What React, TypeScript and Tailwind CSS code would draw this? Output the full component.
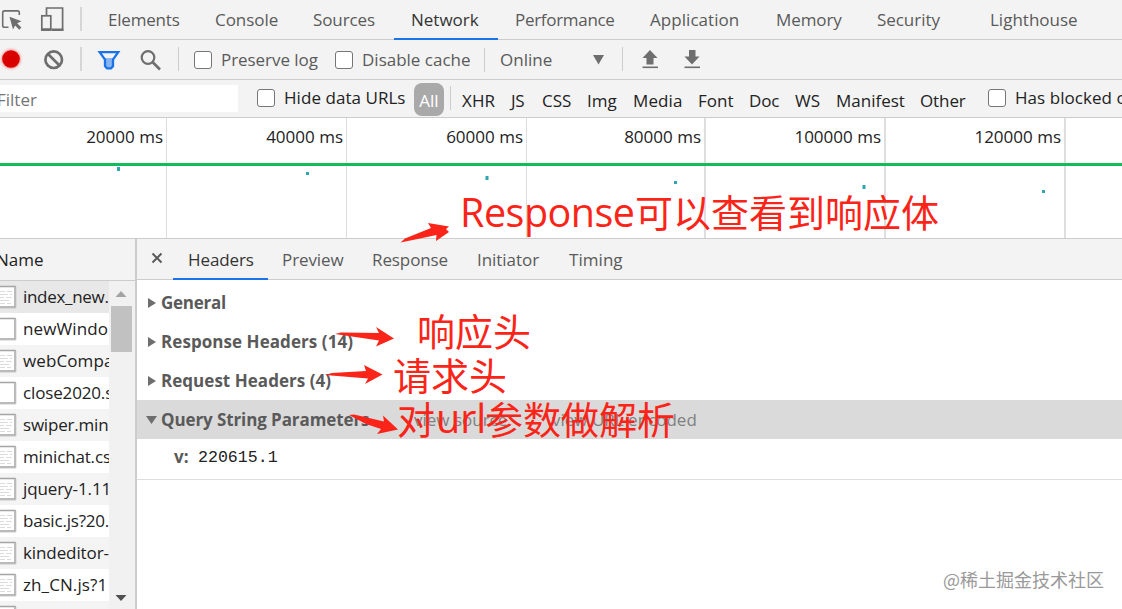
import clsx from 'clsx'

const mainTabs = [
  { label: 'Elements', cell: 'w-[107px]', text: 'tracking-[-0.2px]' },
  { label: 'Console', cell: 'w-[98px]', text: 'tracking-[-0.05px]' },
  { label: 'Sources', cell: 'w-[98px]', text: 'tracking-[-0.1px]' },
  { label: 'Network', cell: 'w-[104px]', text: 'tracking-[0px]', active: true },
  { label: 'Performance', cell: 'w-[135px]', text: 'tracking-[-0.3px]' },
  { label: 'Application', cell: 'w-[126px]', text: 'tracking-[0.05px]' },
  { label: 'Memory', cell: 'w-[101px]', text: 'tracking-[-0.1px]' },
  { label: 'Security', cell: 'w-[113px]', text: 'tracking-[-0.05px]' },
  { label: 'Lighthouse', cell: 'w-[122px]', text: 'tracking-[0px]' },
]

const filterTypes = [
  { label: 'XHR', cell: 'w-[49px]', text: 'tracking-[0.1px]' },
  { label: 'JS', cell: 'w-[31px]', text: 'tracking-[-0.3px]' },
  { label: 'CSS', cell: 'w-[45px]', text: 'tracking-[0px]' },
  { label: 'Img', cell: 'w-[46px]', text: 'tracking-[0px]' },
  { label: 'Media', cell: 'w-[65px]', text: 'tracking-[0.1px]' },
  { label: 'Font', cell: 'w-[51px]', text: 'tracking-[0px]' },
  { label: 'Doc', cell: 'w-[46px]', text: 'tracking-[-0.1px]' },
  { label: 'WS', cell: 'w-[41px]', text: 'tracking-[0px]' },
  { label: 'Manifest', cell: 'w-[84px]', text: 'tracking-[0px]' },
  { label: 'Other', cell: 'w-[68px]', text: 'tracking-[-0.1px]' },
]

const ticks = [
  { label: '20000 ms', cell: 'w-[167px] border-r' },
  { label: '40000 ms', cell: 'w-[180px] border-r' },
  { label: '60000 ms', cell: 'w-[180px] border-r' },
  { label: '80000 ms', cell: 'w-[179px] border-r-2' },
  { label: '100000 ms', cell: 'w-[180px] border-r-2' },
  { label: '120000 ms', cell: 'w-[180px] border-r-2' },
]

// small request marks under the overview line
const marks = [
  { x: 117, y: 49, h: 4 },
  { x: 306, y: 54, h: 3 },
  { x: 485.5, y: 58, h: 4 },
  { x: 674, y: 63, h: 3 },
  { x: 862.5, y: 67, h: 4 },
  { x: 1042, y: 72, h: 3 },
]

const requests = [
  { name: 'index_new.', text: true, tracking: 'tracking-[-0.3px]' },
  { name: 'newWindo', text: false, tracking: 'tracking-[0.1px]' },
  { name: 'webCompa', text: true, tracking: 'tracking-[0.1px]' },
  { name: 'close2020.s', text: false, tracking: 'tracking-[-0.15px]' },
  { name: 'swiper.min', text: true, tracking: 'tracking-[-0.2px]' },
  { name: 'minichat.cs', text: true, tracking: 'tracking-[-0.15px]' },
  { name: 'jquery-1.11', text: true, tracking: 'tracking-[-0.1px]' },
  { name: 'basic.js?20.', text: true, tracking: 'tracking-[-0.2px]' },
  { name: 'kindeditor-', text: true, tracking: 'tracking-[-0.1px]' },
  { name: 'zh_CN.js?1', text: true, tracking: 'tracking-[0.1px]' },
  { name: '', text: true, tracking: 'tracking-[0px]' },
]

const detailTabs = [
  { label: 'Headers', cell: 'w-[95px]', text: 'tracking-[-0.1px]', active: true },
  { label: 'Preview', cell: 'w-[90px]', text: 'tracking-[-0.1px]' },
  { label: 'Response', cell: 'w-[105px]', text: 'tracking-[-0.1px]' },
  { label: 'Initiator', cell: 'w-[92px]', text: 'tracking-[-0.05px]' },
  { label: 'Timing', cell: 'w-[84px]', text: 'tracking-[0.05px]' },
]

const sections = [
  { label: 'General', text: 'tracking-[-0.25px]' },
  { label: 'Response Headers (14)', text: 'tracking-[0.06px]' },
  { label: 'Request Headers (4)', text: 'tracking-[0.03px]' },
]

function Checkbox() {
  return <span className="h-[18px] w-[18px] shrink-0 rounded-[3px] border border-[#767676] bg-white" />
}

function Divider({ className }: { className?: string }) {
  return <span className={clsx('w-px shrink-0 bg-[#ccc]', className)} />
}

function FileIcon({ lines }: { lines: boolean }) {
  return (
    <svg className="shrink-0" width="17" height="24" viewBox="0 0 17 24">
      <rect x="-4" y="1.5" width="19" height="20.5" fill="#fff" stroke="#a4a4a4" strokeWidth="1.5" />
      <path d="M0 22.9H15.8V2" fill="none" stroke="#bcbcbc" strokeWidth="1" />
      {lines && (
        <path
          d="M0 6.5H5M7 6.5H12M0 9.5H8M10 9.5H12M0 12.5H4M6 12.5H12M0 15.5H9M0 18.5H5M7 18.5H11"
          stroke="#dcdcdc"
          strokeWidth="1.2"
        />
      )}
    </svg>
  )
}

function MainTabs() {
  return (
    <nav className="flex h-10 border-b border-[#ccc] text-[#5a5a5a]">
      <div className="flex w-[91px] shrink-0 items-start">
        <svg width="91" height="39" viewBox="0 0 91 39" fill="none">
          <path d="M8.5 27.3H4.5Q2.7 27.3 2.7 25.5V12.7Q2.7 10.9 4.5 10.9H17.5Q19.3 10.9 19.3 12.7V15" stroke="#6e6e6e" strokeWidth="1.6" />
          <path d="M9.5 16.8L21.5 21.2L17.2 23.3L21.4 27.6L19.3 29.7L15.1 25.4L13 29.4Z" fill="#6e6e6e" />
          <path d="M46.5 15V8H62.6V30H52" stroke="#6e6e6e" strokeWidth="1.7" />
          <rect x="41.8" y="15.8" width="9" height="14.2" stroke="#6e6e6e" strokeWidth="1.7" />
          <path d="M41 29.5H51.5M52 29.7H63.4" stroke="#6e6e6e" strokeWidth="2.4" />
          <path d="M81 7V31" stroke="#ccc" strokeWidth="1.5" />
        </svg>
      </div>
      {mainTabs.map((tab) => (
        <div
          key={tab.label}
          className={clsx(
            'h-10 shrink-0 border-b-2 pt-[7px] pl-[17px]',
            tab.cell,
            tab.text,
            tab.active ? 'border-[#1a73e8] text-[#333]' : 'border-transparent'
          )}
        >
          {tab.label}
        </div>
      ))}
    </nav>
  )
}

function Toolbar() {
  return (
    <div className="flex h-10 items-center border-b border-[#ccc] text-[#5a5a5a]">
      <svg className="shrink-0" width="194" height="39" viewBox="0 0 194 39" fill="none">
        <defs>
          <filter id="glow" x="-50%" y="-50%" width="200%" height="200%">
            <feGaussianBlur stdDeviation="1.2" />
          </filter>
        </defs>
        <circle cx="11" cy="19" r="10" fill="#f00" opacity="0.35" filter="url(#glow)" />
        <circle cx="11" cy="19" r="8.8" fill="#d90000" />
        <circle cx="53.7" cy="19.7" r="8.3" stroke="#6e6e6e" strokeWidth="2.7" />
        <path d="M48 14L59.5 25.5" stroke="#6e6e6e" strokeWidth="2.7" />
        <path d="M81 7V31" stroke="#ccc" strokeWidth="1.5" />
        <path d="M104 18H114V27L112 28.5H107L105 27Z" fill="#8ab4f0" />
        <path d="M99.7 12.2H118.2L113 19.5V26L111 28.4H107L105 26V19.5Z" stroke="#1a73e8" strokeWidth="2.3" />
        <circle cx="148" cy="17.5" r="6.3" stroke="#6e6e6e" strokeWidth="2.2" />
        <path d="M152.5 22L160 29.5" stroke="#6e6e6e" strokeWidth="2.6" />
        <path d="M178.5 7V31" stroke="#ccc" />
      </svg>
      <Checkbox />
      <span className="w-[123px] shrink-0 pl-[9px] tracking-[-0.05px]">Preserve log</span>
      <Checkbox />
      <span className="w-[131px] shrink-0 pl-[9px]">Disable cache</span>
      <Divider className="h-6" />
      <span className="w-[108px] shrink-0 pl-[15px]">Online</span>
      <svg className="shrink-0" width="120" height="39" viewBox="0 0 120 39" fill="#6e6e6e">
        <path d="M0 15H11L5.5 24.5Z" />
        <rect x="29" y="7" width="1" height="24" fill="#ccc" />
        <path d="M57 10L64.5 18H60.5V24.5H53.5V18H49.5Z" />
        <rect x="49.5" y="26.5" width="15.5" height="1.6" />
        <path d="M96 10H102.5V16.5H106.5L99 24.5L91.5 16.5H96Z" />
        <rect x="91.5" y="26.5" width="15.5" height="1.6" />
      </svg>
    </div>
  )
}

function FilterBar() {
  return (
    <div className="flex h-[38px] border-b border-[#ccc] text-[#222]">
      <div className="mt-[5px] mr-[19px] h-[27px] w-[238px] shrink-0 bg-white text-[#757575]">
        <span className="-ml-[3px] block leading-[29px]">Filter</span>
      </div>
      <div className="flex h-9 w-[157px] shrink-0 items-center">
        <Checkbox />
        <span className="pl-[9px] tracking-[0.05px]">Hide data URLs</span>
      </div>
      <div className="mt-[3px] h-[33px] w-[30px] shrink-0 rounded-lg bg-[#a9a9a9] text-center leading-[35px] text-white">
        All
      </div>
      <Divider className="mt-1.5 mr-[11px] ml-1.5 h-6" />
      {filterTypes.map((type) => (
        <span key={type.label} className={clsx('shrink-0 pt-[8px]', type.cell, type.text)}>
          {type.label}
        </span>
      ))}
      <div className="flex h-9 w-[200px] shrink-0 items-center">
        <Checkbox />
        <span className="pl-[9px] tracking-[0.05px]">Has blocked cookies</span>
      </div>
    </div>
  )
}

function Overview() {
  return (
    <div className="relative flex h-[121px] border-b border-[#ccc] bg-white text-[#222]">
      {ticks.map((tick) => (
        <div
          key={tick.label}
          className={clsx('h-[120px] shrink-0 border-[#dedede] pt-[6px] pr-[3px] text-right', tick.cell)}
        >
          {tick.label}
        </div>
      ))}
      <svg className="absolute top-0 left-0" width="1122" height="120" viewBox="0 0 1122 120">
        <rect y="45" width="1122" height="3" fill="#14bb5a" />
        {marks.map((mark) => (
          <rect key={mark.x} x={mark.x} y={mark.y} width="3" height={mark.h} fill="#2fa5b0" />
        ))}
      </svg>
    </div>
  )
}

function RequestList() {
  return (
    <aside className="flex w-[137px] shrink-0 flex-col border-r-2 border-[#ccc]">
      <div className="h-[42px] shrink-0 border-b border-[#ccc] pt-[8px] text-[#222]">
        <span className="-ml-[4px]">Name</span>
      </div>
      <div className="flex min-h-0 flex-1">
        <ul className="w-[109px] shrink-0 overflow-hidden bg-white text-[#222]">
          {requests.map((request, index) => (
            <li
              key={index}
              className={clsx(
                'flex h-8 items-center whitespace-nowrap',
                index === 0 ? 'bg-[#e8e8e8]' : index % 2 === 0 ? 'bg-[#f4f4f4]' : 'bg-white'
              )}
            >
              <FileIcon lines={request.text} />
              <span className={clsx('pl-1.5', request.tracking)}>{request.name}</span>
            </li>
          ))}
        </ul>
        <div className="flex flex-1 flex-col items-center justify-between bg-[#f1f1f1] pr-[2px]">
          <div className="flex w-full flex-col items-center">
            <svg width="12" height="25" viewBox="0 0 12 25">
              <path d="M0.5 16L6 10L11.5 16Z" fill="#a3a3a3" />
            </svg>
            <div className="h-[46px] w-[21px] bg-[#c1c1c1]" />
          </div>
          <svg width="12" height="16" viewBox="0 0 12 16">
            <path d="M0.5 2L6 8L11.5 2Z" fill="#505050" />
          </svg>
        </div>
      </div>
    </aside>
  )
}

function Details() {
  return (
    <main className="min-w-0 flex-1 bg-white text-[#5a5a5a]">
      <div className="flex h-[41px] border-b border-[#ccc] bg-[#f3f3f3]">
        <svg className="shrink-0" width="36" height="40" viewBox="0 0 36 40">
          <path d="M15.5 14.5L24.5 23.5M24.5 14.5L15.5 23.5" stroke="#5a5a5a" strokeWidth="2" />
        </svg>
        {detailTabs.map((tab) => (
          <div
            key={tab.label}
            className={clsx(
              'h-[41px] shrink-0 pt-[8px]',
              tab.cell,
              tab.text,
              tab.active ? 'border-b-2 border-[#1a73e8] pl-[15px] text-[#333]' : 'pl-[14px]'
            )}
          >
            {tab.label}
          </div>
        ))}
      </div>
      <div className="pt-[3px] font-bold">
        {sections.map((section) => (
          <div key={section.label} className="flex h-[39px] items-center">
            <svg className="mr-[5px] ml-[11px]" width="8" height="12" viewBox="0 0 8 12">
              <path d="M0 1L8 6L0 11Z" fill="#6e6e6e" />
            </svg>
            <span className={section.text}>{section.label}</span>
          </div>
        ))}
        <div className="flex h-[39px] items-center bg-[#dadada]">
          <svg className="mr-[4px] ml-[9px]" width="11" height="12" viewBox="0 0 11 12">
            <path d="M0 2H11L5.5 10Z" fill="#6e6e6e" />
          </svg>
          <span className="w-[253px] tracking-[-0.1px]">Query String Parameters</span>
          <span className="w-[138px] font-normal text-[#808080]">view source</span>
          <span className="font-normal text-[#808080]">view URL encoded</span>
        </div>
      </div>
      <div className="flex h-[41px] border-b border-[#ddd] pt-[5px] pl-[37px]">
        <span className="w-6 font-bold">v:</span>
        <span className="pt-px font-['Liberation_Mono',monospace] text-[16.6px] text-[#222]">220615.1</span>
      </div>
    </main>
  )
}

// red notes and arrows drawn over the panel
function Annotations() {
  return (
    <div className="pointer-events-none absolute inset-0 font-['Open_Sans','Noto_Sans_CJK_SC',sans-serif] text-[38px] leading-[50px] whitespace-nowrap text-[#fb2418]">
      <svg className="absolute inset-0" width="1122" height="609" viewBox="0 0 1122 609" fill="#fb2418">
        <path d="M400.5 242.5L405 238.5L431 228L428 223L449 226.5L446 229L449 232L436 241L436.5 235L420 238.5Z" />
        <path d="M335 334L341 332.5L379 333L376 327L394 338.5L376 346.5L379 340.5Z" />
        <path d="M325 375L332 373L366 371L364 365L382.5 374.5L365 384L368 378.5Z" />
        <path d="M349 415L354 414.5L384 421.5L383 415.5L398 429.5L377 434L381 429L366 424Z" />
      </svg>
      <span className="absolute top-[187px] left-[460px] text-[39.5px] tracking-[-0.5px]">Response</span>
      <span className="absolute top-[187px] left-[635px]">可以查看到响应体</span>
      <span className="absolute top-[306px] left-[417px]">响应头</span>
      <span className="absolute top-[350px] left-[393px]">请求头</span>
      <span className="absolute top-[394px] left-[397px]">对</span>
      <span className="absolute top-[393px] left-[436px] text-[39.5px]">url</span>
      <span className="absolute top-[394px] left-[485px]">参数做解析</span>
    </div>
  )
}

export default function App() {
  return (
    <div className="relative flex h-[609px] w-[1122px] flex-col overflow-hidden bg-[#f3f3f3] font-['Open_Sans',sans-serif] text-[17px] leading-[26px] whitespace-nowrap">
      <MainTabs />
      <Toolbar />
      <FilterBar />
      <Overview />
      <div className="flex min-h-0 flex-1">
        <RequestList />
        <Details />
      </div>
      <Annotations />
      <span className="absolute top-[566px] left-[943px] font-['Noto_Sans_CJK_SC',sans-serif] text-[18px] text-[#999]">
        @稀土掘金技术社区
      </span>
    </div>
  )
}
